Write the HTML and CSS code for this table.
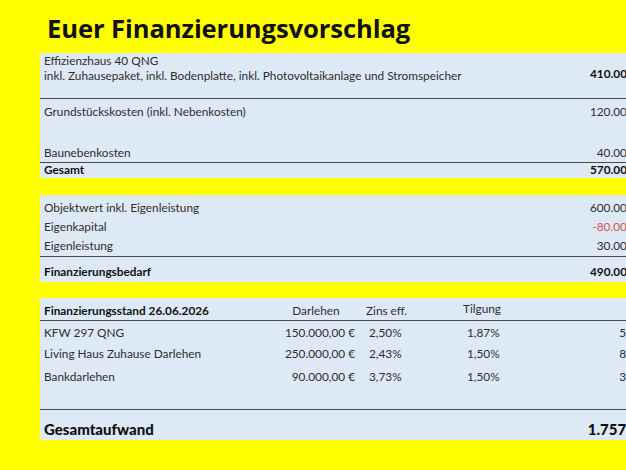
FILE: index.html
```html
<!DOCTYPE html>
<html lang="de">
<head>
<meta charset="utf-8">
<title>Euer Finanzierungsvorschlag</title>
<link rel="stylesheet" href="styles.css">
</head>
<body>
<div class="page">
  <h1 class="title">Euer Finanzierungsvorschlag</h1>

  <section class="panel p1">
    <div class="row r-haus">
      <div class="label">Effizienzhaus 40 QNG<br>inkl. Zuhausepaket, inkl. Bodenplatte, inkl. Photovoltaikanlage und Stromspeicher</div>
      <div class="value bold bottom">410.000,00 €</div>
    </div>
    <div class="group">
      <div class="row r-grund">
        <div class="label">Grundstückskosten (inkl. Nebenkosten)</div>
        <div class="value">120.000,00 €</div>
      </div>
      <div class="row r-baun">
        <div class="label">Baunebenkosten</div>
        <div class="value">40.000,00 €</div>
      </div>
    </div>
    <div class="row r-sum">
      <div class="label bold">Gesamt</div>
      <div class="value bold">570.000,00 €</div>
    </div>
  </section>

  <section class="panel p2">
    <div class="group g2">
      <div class="row r-std">
        <div class="label">Objektwert inkl. Eigenleistung</div>
        <div class="value">600.000,00 €</div>
      </div>
      <div class="row r-std">
        <div class="label">Eigenkapital</div>
        <div class="value neg">-80.000,00 €</div>
      </div>
      <div class="row r-std">
        <div class="label">Eigenleistung</div>
        <div class="value">30.000,00 €</div>
      </div>
    </div>
    <div class="row r-bedarf">
      <div class="label bold">Finanzierungsbedarf</div>
      <div class="value bold">490.000,00 €</div>
    </div>
  </section>

  <section class="panel p3">
    <div class="trow thead">
      <div class="c1 bold">Finanzierungsstand 26.06.2026</div>
      <div class="c2 center">Darlehen</div>
      <div class="c3 hz">Zins eff.</div>
      <div class="c4 ht">Tilgung</div>
      <div class="c5"></div>
    </div>
    <div class="tbody">
      <div class="trow r-kfw">
        <div class="c1">KFW 297 QNG</div>
        <div class="c2">150.000,00 €</div>
        <div class="c3">2,50%</div>
        <div class="c4">1,87%</div>
        <div class="c5">546,25 €</div>
      </div>
      <div class="trow r-liv">
        <div class="c1">Living Haus Zuhause Darlehen</div>
        <div class="c2">250.000,00 €</div>
        <div class="c3">2,43%</div>
        <div class="c4">1,50%</div>
        <div class="c5">818,75 €</div>
      </div>
      <div class="trow r-bank">
        <div class="c1">Bankdarlehen</div>
        <div class="c2">90.000,00 €</div>
        <div class="c3">3,73%</div>
        <div class="c4">1,50%</div>
        <div class="c5">392,25 €</div>
      </div>
    </div>
    <div class="row r-total">
      <div class="label bold">Gesamtaufwand</div>
      <div class="value bold">1.757.250,00 €</div>
    </div>
  </section>
</div>
</body>
</html>
```

FILE: styles.css
```css
html, body {
  margin: 0;
  padding: 0;
  overflow: hidden;
}
body {
  background: #ffff00;
  font-family: Lato, "Liberation Sans", sans-serif;
  color: #2e2e2e;
  font-size: 11.8px;
  width: 626px;
  height: 470px;
}
.page {
  padding-left: 40px;
  width: 720px;
}
.title {
  margin: 0;
  height: 53px;
  box-sizing: border-box;
  padding: 12px 0 0 7px;
  font-family: "Open Sans", Lato, sans-serif;
  font-size: 25.6px;
  line-height: 34px;
  font-weight: 700;
  color: #111;
  letter-spacing: -0.1px;
}
.panel {
  background: #dde9f5;
  width: 660px;
  box-sizing: border-box;
  padding: 0 40px 0 4px;
}
.p2 { margin-top: 17px; }
.p3 { margin-top: 16px; padding-right: 4px; }

.row {
  display: flex;
  justify-content: space-between;
  line-height: 15px;
}
.value { text-align: right; white-space: nowrap; }
.bottom { align-self: flex-end; }
.bold { font-weight: 700; color: #111; }
.neg { color: #d9534f; }

.r-haus {
  height: 46px;
  box-sizing: border-box;
  padding: 0 40px 17px 4px;
  border-bottom: 1.5px solid #4a4a4a;
  margin: 0 -40px 0 -4px;
}
.group {
  height: 64px;
  display: flex;
  flex-direction: column;
  justify-content: space-between;
  box-sizing: border-box;
  padding: 5px 40px 2px 4px;
  border-bottom: 1.5px solid #4a4a4a;
  margin: 0 -40px 0 -4px;
}
.r-sum {
  height: 15px;
  line-height: 14px;
}

.g2 {
  height: 62px;
  padding-top: 3px;
  padding-bottom: 0;
  justify-content: flex-start;
}
.r-std { height: 19px; line-height: 19px; }
.r-bedarf {
  height: 25px;
  line-height: 19px;
  box-sizing: border-box;
  padding-top: 5px;
}

.trow {
  display: grid;
  grid-template-columns: 238px 76px 104px 100px 104px;
  align-items: center;
  line-height: 15px;
  white-space: nowrap;
}
.c2 { text-align: right; padding-right: 3px; }
.c3 { padding-left: 11px; }
.c4 { padding-left: 5px; }
.c5 { text-align: right; }
.center { text-align: center; padding-right: 8px; }
.hz { padding-left: 8px; }
.ht { padding-left: 1px; position: relative; top: -2px; }
.thead {
  height: 23px;
  padding: 2px 4px 0;
  box-sizing: border-box;
  border-bottom: 1.5px solid #4a4a4a;
  margin: 0 -4px;
}
.tbody {
  height: 88px;
  border-bottom: 1.5px solid #4a4a4a;
  margin: 0 -4px;
  padding: 0 4px;
}
.r-kfw { height: 22px; }
.r-liv { height: 20px; }
.r-bank { height: 26px; }
.r-total {
  height: 30px;
  font-size: 15px;
  line-height: 18px;
  padding: 10px 7px 0 0;
  box-sizing: border-box;
}
.r-total .bold { font-weight: 900; }
```
